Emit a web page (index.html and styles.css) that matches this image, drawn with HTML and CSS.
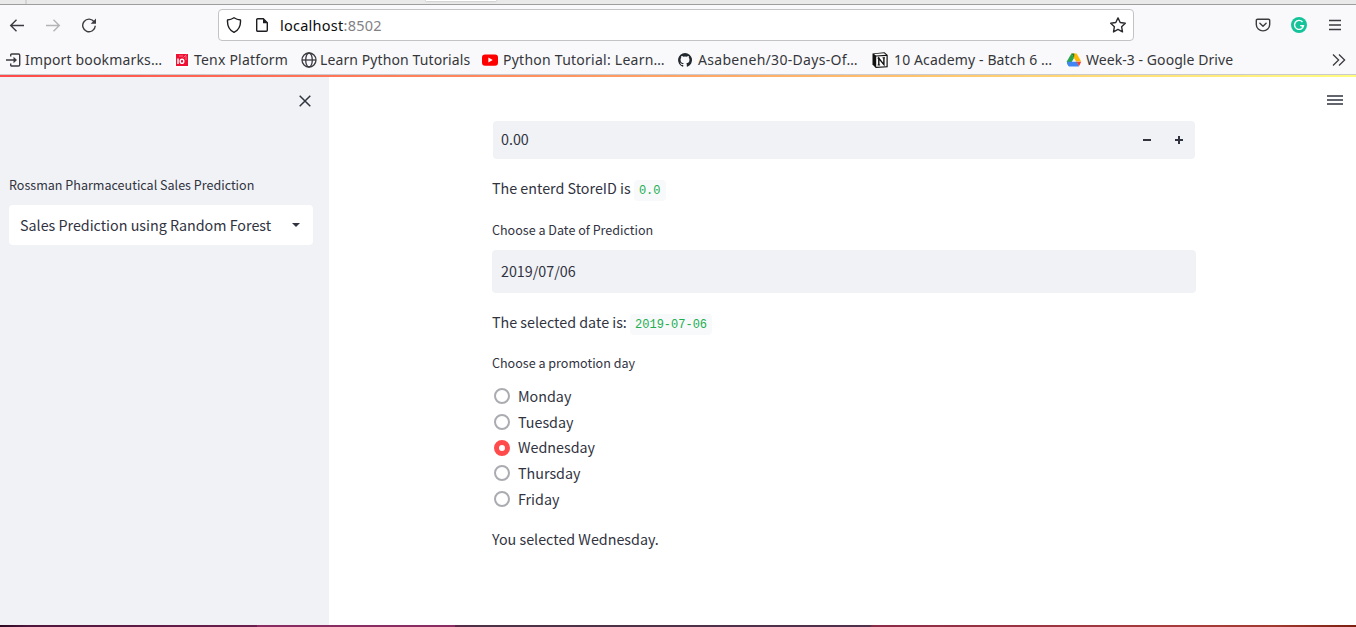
FILE: index.html
```html
<!DOCTYPE html>
<html lang="en">
<head>
<meta charset="utf-8">
<title>Rossman Pharmaceutical Sales Prediction</title>
<link rel="stylesheet" href="styles.css">
</head>
<body>
<div class="window">
  <div class="tabstrip"><span class="tab-edge"></span><span class="tab"></span></div>
  <header class="nav">
    <div class="nav-buttons">
      <svg class="i16" viewBox="0 0 16 16" fill="none" stroke="#3b3b40" stroke-width="1.4"><path d="M15 8.500H2M7.500 2.700 1.700 8.500l5.800 5.800"/></svg>
      <svg class="i16" viewBox="0 0 16 16" fill="none" stroke="#b4b4b7" stroke-width="1.4"><path d="M1 8.500h13M8.500 2.700l5.800 5.800-5.800 5.800"/></svg>
      <svg class="i16" viewBox="0 0 16 16"><path d="M13.300 5A6.300 6.300 0 1 0 14.300 8.800" fill="none" stroke="#3b3b40" stroke-width="1.400"/><path d="M15 1.500v5.300H9.700z" fill="#3b3b40"/></svg>
    </div>
    <div class="urlbar">
      <svg class="i16" viewBox="0 0 16 16" fill="none" stroke="#1e1e22" stroke-width="1.400" stroke-linejoin="round"><path d="M8 .8c2 1.400 4.200 2 6.500 2.200C14.800 8.500 12.800 13 8 15.300 3.200 13 1.200 8.500 1.500 3 3.800 2.800 6 2.200 8 .8z"/></svg>
      <svg class="i16 page" viewBox="0 0 16 16"><path d="M3.700 1.700h5.600l4 4v7.600a1 1 0 0 1-1 1H3.700a1 1 0 0 1-1-1V2.700a1 1 0 0 1 1-1z" fill="none" stroke="#1e1e22" stroke-width="1.400"/><path d="M9 1.400v4.800h4.800z" fill="#1e1e22"/></svg>
      <span class="url"><b>localhost</b>:8502</span>
      <svg class="i16 star" viewBox="0 0 16 16" fill="none" stroke="#2b2b2f" stroke-width="1.400" stroke-linejoin="round"><path d="m8 .9 2.200 4.600 5.100.7-3.700 3.500.9 5.200L8 12.400l-4.500 2.500.9-5.200L.7 6.200l5.100-.7z"/></svg>
    </div>
    <div class="nav-right">
      <svg class="i16" viewBox="0 0 16 16" fill="none" stroke="#3b3b40" stroke-width="1.400" stroke-linecap="round" stroke-linejoin="round"><path d="M2.500 2.200h11a1.200 1.200 0 0 1 1.200 1.200V7.500a6.700 6.400 0 0 1-13.400 0V3.400a1.200 1.200 0 0 1 1.200-1.200z"/><path d="m4.900 6.200 3.100 3 3.100-3"/></svg>
      <svg class="i16" viewBox="0 0 16 16"><circle cx="8" cy="8" r="8" fill="#15c39a"/><path d="M11.500 5A4.500 4.500 0 1 0 12.500 8.600H9.200M10.700 8.700 12 9.900" fill="none" stroke="#fff" stroke-width="1.400"/></svg>
      <svg class="i16" viewBox="0 0 16 16" stroke="#3b3b40" stroke-width="1.300"><path d="M2 3.500h12M2 8h12M2 12.500h12"/></svg>
    </div>
  </header>
  <nav class="bookmarks">
    <a class="bm import"><svg class="i16" viewBox="0 0 16 16" fill="none" stroke="#3b3b40" stroke-width="1.400"><path d="M4.700 4.500V3a1 1 0 0 1 1-1H12.500a1.200 1.200 0 0 1 1.200 1.200v9.600A1.200 1.200 0 0 1 12.500 14H5.700a1 1 0 0 1-1-1v-1.500M0 8h9"/><path d="M7.500 4.800 11 8l-3.500 3.200z" fill="#3b3b40" stroke="none"/></svg><span>Import bookmarks…</span></a>
    <a class="bm tenx"><svg class="i16" viewBox="0 0 16 16"><path d="M0 0h16v16H0z" fill="#fff"/><path d="M2 2h12v12H2z" fill="#ee1133"/><path d="M4 6.500v5.500" stroke="#fff" stroke-width="1.500"/><ellipse cx="8" cy="9.300" rx="1.800" ry="2.100" fill="none" stroke="#fff" stroke-width="1.400"/><path d="m9.500 5.500 3-3M12 8V4M5 4h4" stroke="#ff9aa8" stroke-width=".7"/></svg><span>Tenx Platform</span></a>
    <a class="bm learn"><svg class="i16" viewBox="0 0 16 16" fill="none" stroke="#3b3b40" stroke-width="1.300"><circle cx="8" cy="8" r="7"/><ellipse cx="8" cy="8" rx="3.300" ry="7"/><path d="M1 8h14"/></svg><span>Learn Python Tutorials</span></a>
    <a class="bm youtube"><svg class="i16" viewBox="0 0 16 16"><rect y="2.400" width="16" height="11.400" rx="3" fill="#f00"/><path d="m6.400 5.600 4.300 2.500-4.300 2.500z" fill="#fff"/></svg><span>Python Tutorial: Learn…</span></a>
    <a class="bm github"><svg class="i16" viewBox="0 0 16 16"><path fill="#24292f" d="M8 1a7 7 0 0 0-2.200 13.640c.35.060.48-.15.480-.34v-1.300c-1.950.420-2.360-.82-2.360-.82-.32-.81-.78-1.030-.78-1.030-.64-.43.050-.42.050-.42.700.050 1.070.720 1.070.720.630 1.080 1.640.770 2.040.590.060-.45.240-.76.440-.94-1.550-.18-3.190-.78-3.190-3.460 0-.76.270-1.390.720-1.880-.07-.18-.31-.89.070-1.850 0 0 .59-.19 1.930.720a6.700 6.700 0 0 1 3.500 0c1.340-.91 1.930-.72 1.930-.72.380.960.140 1.670.070 1.850.450.490.720 1.120.720 1.880 0 2.690-1.640 3.280-3.200 3.450.250.220.480.640.480 1.300v1.920c0 .190.130.410.480.340A7 7 0 0 0 8 1z"/></svg><span>Asabeneh/30-Days-Of…</span></a>
    <a class="bm notion"><svg class="i16" viewBox="0 0 16 16"><path d="M.5 1.500 12.500.3 15.700 3v12.200L3.800 16 .5 12.500z" fill="#111"/><path d="M2 2 12 1.200 14 2.800 4 3.400z" fill="#fff"/><path d="M4.200 4.600 14.500 4v10.200l-10.300.6z" fill="#fff"/><path d="M6.800 13V6.300L11.900 12.600V5.700" fill="none" stroke="#111" stroke-width="1.400"/><path d="M5.500 6.200h2.300M5.600 13h2.500M10.500 5.800H13" stroke="#111"/></svg><span>10 Academy - Batch 6 …</span></a>
    <a class="bm drive"><svg class="i16" viewBox="0 0 16 16"><path d="M5.400 1.500 8 6 3.300 14.200 1.800 13 .8 9.500z" fill="#2ba24c"/><path d="M5.400 1.500h5.200l4.600 8H10z" fill="#ffba00"/><path d="M5.400 1.500h3L8 6z" fill="#188038"/><path d="M5 9.800h6l2 4.700H3L.8 11z" fill="#4285f4"/><path d="M.8 9.800H5L2.900 14z" fill="#4285f4"/><path d="M10.500 9.800h4.700L13 14.300z" fill="#ea4335"/></svg><span>Week-3 - Google Drive</span></a>
    <svg class="i16 more" viewBox="0 0 16 16" fill="none" stroke="#3b3b40" stroke-width="1.300"><path d="m2 2.500 5.600 5.500L2 13.500M8 2.500 13.600 8 8 13.500"/></svg>
  </nav>
  <div class="decoration"></div>
  <div class="app">
    <aside class="sidebar">
      <svg class="close" viewBox="0 0 12 12" stroke="#31333f" stroke-width="1.500"><path d="m.7.700 10.600 10.600M11.300.700.7 11.300"/></svg>
      <label class="label side-label">Rossman Pharmaceutical Sales Prediction</label>
      <div class="select"><span>Sales Prediction using Random Forest</span><i class="caret"></i></div>
    </aside>
    <main class="main">
      <div class="content">
        <div class="number"><span>0.00</span><svg class="steps" viewBox="0 0 42 10" stroke="#31333f" stroke-width="2"><path d="M0 5h8M32 5h8M36 1v8"/></svg></div>
        <p class="text store">The enterd StoreID is <code>0.0</code></p>
        <label class="label date-label">Choose a Date of Prediction</label>
        <div class="date">2019/07/06</div>
        <p class="text selected">The selected date is: <code>2019-07-06</code></p>
        <label class="label promo-label">Choose a promotion day</label>
        <div class="radios">
          <div class="radio"><i></i>Monday</div>
          <div class="radio"><i></i>Tuesday</div>
          <div class="radio on"><i></i>Wednesday</div>
          <div class="radio"><i></i>Thursday</div>
          <div class="radio"><i></i>Friday</div>
        </div>
        <p class="text result">You selected Wednesday.</p>
      </div>
      <svg class="menu" viewBox="0 0 16 11" stroke="#31333f" stroke-width="1.700"><path d="M0 1h16M0 5h16M0 9h16"/></svg>
    </main>
  </div>
  <div class="desktop"></div>
</div>
</body>
</html>
```

FILE: styles.css
```css
* { box-sizing: border-box; }
body { margin: 0; background: #fff; }
p { margin: 0; }
svg { display: block; flex: none; }
.window { width: 1356px; height: 627px; display: flex; flex-direction: column; overflow: hidden; background: #f9f9fb; font-family: "Noto Sans", sans-serif; }
.i16 { width: 16px; height: 16px; }

.tabstrip { height: 5px; flex: none; display: flex; background: #e9e9ea; border-bottom: 1px solid #9e9e9f; }
.tab-edge { width: 27px; border-right: 2px solid #d4d4d5; }
.tab { width: 70px; height: 1px; margin-left: 399px; background: #fff; box-shadow: 0 0 2px #888; }

.nav { height: 40px; flex: none; display: flex; align-items: center; }
.nav-buttons { width: 218px; padding-left: 9px; display: flex; gap: 20px; }
.urlbar { width: 916px; height: 32px; padding: 0 7px; display: flex; align-items: center; border: 1px solid #c3c3c6; border-radius: 4px; background: #fff; }
.page { margin-left: 12px; }
.url { margin-left: 10px; font-size: 14.5px; line-height: 20px; letter-spacing: .25px; color: #828286; }
.url b { font-weight: 400; color: #0c0c0d; }
.star { margin-left: auto; }
.nav-right { margin-left: 121px; display: flex; gap: 20px; }

.bookmarks { height: 30px; flex: none; padding-left: 6px; display: flex; align-items: center; border-bottom: 1px solid #cbcbce; }
.bm { display: flex; align-items: center; gap: 4px; font-size: 14px; line-height: 20px; white-space: nowrap; color: #36363a; }
.import { width: 168px; gap: 3px; letter-spacing: .16px; }
.tenx { width: 127px; letter-spacing: .2px; }
.learn { width: 181px; gap: 3px; letter-spacing: .1px; }
.youtube { width: 195px; gap: 5px; letter-spacing: .25px; }
.github { width: 195px; gap: 5px; letter-spacing: .3px; }
.notion { width: 194px; gap: 6px; letter-spacing: .13px; }
.drive { width: 265px; letter-spacing: .06px; }

.decoration { height: 2px; flex: none; background: linear-gradient(90deg, #ff4b4b, #fffd80); }
.app { height: 548px; flex: none; display: flex; background: #fff; font-family: "Noto Sans CJK JP", sans-serif; color: #31333f; }
.sidebar { width: 329px; padding: 18px 16px 0 9px; background: #f0f2f6; }
.close { width: 12px; height: 12px; margin-left: 290px; }
.label { display: block; font-size: 12.55px; line-height: 20px; }
.side-label { margin-top: 68px; }
.select { height: 40px; margin-top: 10px; padding: 0 13px 0 11px; display: flex; align-items: center; justify-content: space-between; border-radius: 4px; background: #fff; font-size: 14.3px; line-height: 24px; }
.caret { border: 4px solid transparent; border-top-color: #31333f; border-bottom: 0; }
.main { width: 1027px; padding-right: 13px; display: flex; justify-content: space-between; }
.content { width: 867px; padding: 44px 0 0 163px; font-size: 14.3px; line-height: 24px; }
.number { width: 702px; height: 38px; margin-left: 1px; padding: 0 10px 0 8px; display: flex; align-items: center; justify-content: space-between; border-radius: 4px; background: #f0f2f6; }
.number span { padding-bottom: 2px; }
.steps { width: 42px; height: 10px; }
.text { height: 24px; white-space: nowrap; }
.text code { padding: 4px 5px 3px; border-radius: 4px; background: #f8f9fb; font: 12px "Liberation Mono", monospace; color: #21ae50; }
.store { margin-top: 17px; }
.date-label { margin-top: 20px; }
.date { width: 704px; height: 43px; margin-top: 10px; padding: 0 9px; border-radius: 4px; background: #f0f2f6; line-height: 41px; }
.selected { margin-top: 17px; }
.promo-label { margin-top: 19px; }
.radios { margin-top: 10px; }
.radio { height: 25.750px; padding-left: 2px; display: flex; align-items: center; gap: 8px; }
.radio i { width: 16px; height: 16px; border: 2px solid #abacb1; border-radius: 50%; }
.radio.on i { margin-top: 1px; border: 5px solid #ff4b4b; background: #fff; }
.result { margin-top: 15px; }
.menu { width: 16px; height: 11px; margin-top: 18px; }
.desktop { height: 2px; background: linear-gradient(90deg, #2c0a22 0, #4f173b 27px, #6b1f4e 257px, #8a2c62 257px, #8a2c62 455px, #5b2748 455px, #4b3345 480px, #50304a 870px, #8a2c48 872px, #a83c3c 1180px, #a23a30 1270px, #7c2010 1356px); }
```
